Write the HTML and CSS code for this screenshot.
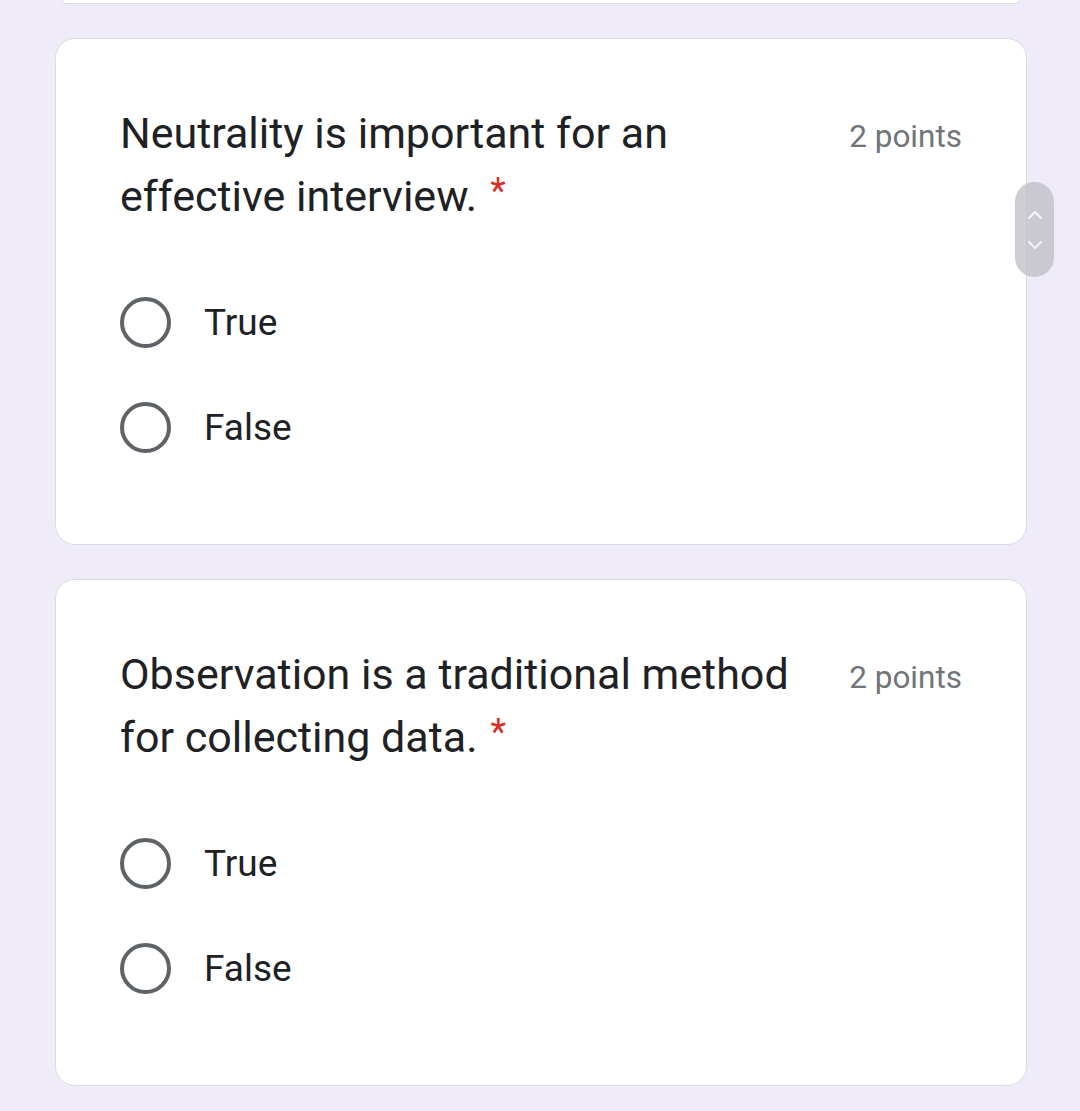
FILE: index.html
```html
<!DOCTYPE html>
<html lang="en">
<head>
<meta charset="utf-8">
<title>Form</title>
<link rel="stylesheet" href="styles.css">
</head>
<body>
<div class="page">
  <div class="card-tail"></div>

  <div class="card">
    <div class="question-head">
      <div class="question-title">Neutrality is important for an effective interview.<span class="req">*</span></div>
      <div class="points">2 points</div>
    </div>
    <div class="options">
      <label class="option"><span class="radio"></span><span class="option-text">True</span></label>
      <label class="option"><span class="radio"></span><span class="option-text">False</span></label>
    </div>
  </div>

  <div class="card">
    <div class="question-head">
      <div class="question-title">Observation is a traditional method for collecting data.<span class="req">*</span></div>
      <div class="points">2 points</div>
    </div>
    <div class="options">
      <label class="option"><span class="radio"></span><span class="option-text">True</span></label>
      <label class="option"><span class="radio"></span><span class="option-text">False</span></label>
    </div>
  </div>
</div>

<div class="scroll-pill">
  <svg width="16" height="10" viewBox="0 0 16 10"><path d="M2 8 L8 2 L14 8" fill="none" stroke="#f4f3f7" stroke-width="2" stroke-linecap="round" stroke-linejoin="round"/></svg>
  <svg width="16" height="10" viewBox="0 0 16 10"><path d="M2 2 L8 8 L14 2" fill="none" stroke="#f4f3f7" stroke-width="2" stroke-linecap="round" stroke-linejoin="round"/></svg>
</div>
</body>
</html>
```

FILE: styles.css
```css
html, body {
  margin: 0;
  padding: 0;
  background: #efebf8;
}
body {
  font-family: Roboto, "Open Sans", Arial, sans-serif;
  color: #202124;
  height: 1111px;
  overflow: hidden;
}
.page {
  width: 972px;
  margin-left: 55px;
  display: flex;
  flex-direction: column;
  gap: 34px;
}
.card-tail {
  height: 3px;
  margin: 0 7px;
  background: #fff;
  border: 1px solid #dadce0;
  border-top: none;
  border-radius: 0 0 20px 20px;
}
.card {
  box-sizing: border-box;
  height: 507px;
  background: #fff;
  border: 1px solid #dadce0;
  border-radius: 20px;
  padding: 63px 64px 0 64px;
}
.question-head {
  display: flex;
  justify-content: space-between;
  align-items: flex-start;
}
.question-title {
  width: 700px;
  font-size: 43px;
  line-height: 63px;
  color: #202124;
}
.req {
  display: inline-block;
  color: #d93025;
  margin-left: 13px;
  font-size: 36px;
  line-height: 30px;
  vertical-align: 8px;
}
.points {
  font-size: 31.5px;
  line-height: 36px;
  margin-top: 17px;
  color: #70757a;
  white-space: nowrap;
}
.options {
  margin-top: 42px;
  display: flex;
  flex-direction: column;
}
.option {
  display: flex;
  align-items: center;
  height: 105px;
}
.radio {
  box-sizing: border-box;
  width: 51px;
  height: 51px;
  border: 4.5px solid #5f6368;
  border-radius: 50%;
  flex: none;
}
.option-text {
  margin-left: 33px;
  font-size: 37px;
  color: #202124;
}
.scroll-pill {
  position: fixed;
  left: 1015px;
  top: 182px;
  width: 39px;
  height: 95px;
  border-radius: 20px;
  background: rgba(190, 189, 196, 0.75);
  display: flex;
  flex-direction: column;
  align-items: center;
  justify-content: center;
  gap: 20px;
}
```
